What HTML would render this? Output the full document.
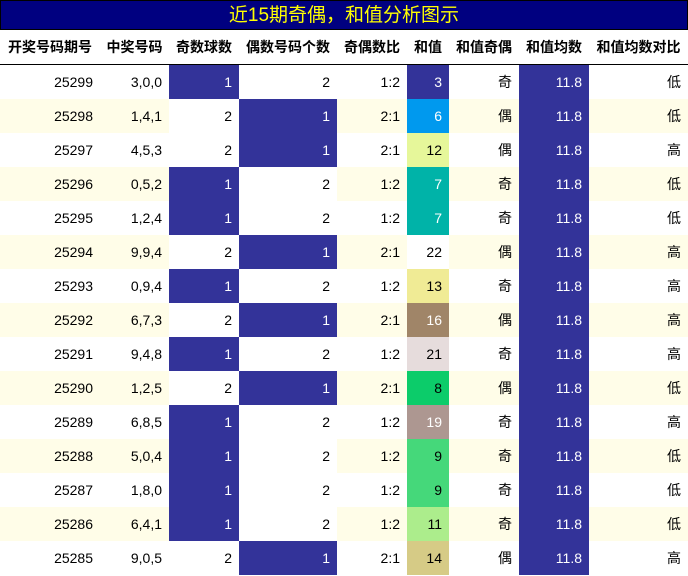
<!DOCTYPE html><html><head><meta charset="utf-8"><style>
body{margin:0;width:688px;height:576px;overflow:hidden;background:#fff;font-family:"Liberation Sans","Noto Sans CJK SC",sans-serif;}
.t{position:absolute;left:0;top:0;width:686px;height:28px;background:#000080;border:1px solid #000;color:#ff0;font-size:19px;line-height:29px;text-align:center;}
table{position:absolute;top:30px;left:0;border-collapse:collapse;table-layout:fixed;width:688px;font-size:14px;}
th{height:34px;font-weight:bold;color:#000;padding:0;text-align:center;border-bottom:1px solid #000;}
td{height:34px;padding:0 7px 0 0;text-align:right;color:#000;}
tr.a td{background:#fffde8;}
td.p{background:#333399 !important;color:#fff;}
</style></head><body>
<div class="t">近15期奇偶，和值分析图示</div>
<table>
<colgroup><col style="width:100px"><col style="width:69px"><col style="width:70px"><col style="width:98px"><col style="width:70px"><col style="width:42px"><col style="width:70px"><col style="width:70px"><col style="width:99px"></colgroup>
<tr><th>开奖号码期号</th><th>中奖号码</th><th>奇数球数</th><th>偶数号码个数</th><th>奇偶数比</th><th>和值</th><th>和值奇偶</th><th>和值均数</th><th>和值均数对比</th></tr>
<tr><td>25299</td><td>3,0,0</td><td class="p">1</td><td>2</td><td>1:2</td><td style="background:#333399;color:#fff">3</td><td>奇</td><td class="p">11.8</td><td>低</td></tr>
<tr class="a"><td>25298</td><td>1,4,1</td><td style="background:#fff">2</td><td class="p">1</td><td>2:1</td><td style="background:#0099ee;color:#fff">6</td><td>偶</td><td class="p">11.8</td><td>低</td></tr>
<tr><td>25297</td><td>4,5,3</td><td>2</td><td class="p">1</td><td>2:1</td><td style="background:#e6f79a">12</td><td>偶</td><td class="p">11.8</td><td>高</td></tr>
<tr class="a"><td>25296</td><td>0,5,2</td><td class="p">1</td><td style="background:#fff">2</td><td>1:2</td><td style="background:#00b3a8;color:#fff">7</td><td>奇</td><td class="p">11.8</td><td>低</td></tr>
<tr><td>25295</td><td>1,2,4</td><td class="p">1</td><td>2</td><td>1:2</td><td style="background:#00b3a8;color:#fff">7</td><td>奇</td><td class="p">11.8</td><td>低</td></tr>
<tr class="a"><td>25294</td><td>9,9,4</td><td style="background:#fff">2</td><td class="p">1</td><td>2:1</td><td style="background:#fff">22</td><td>偶</td><td class="p">11.8</td><td>高</td></tr>
<tr><td>25293</td><td>0,9,4</td><td class="p">1</td><td>2</td><td>1:2</td><td style="background:#f0eb95">13</td><td>奇</td><td class="p">11.8</td><td>高</td></tr>
<tr class="a"><td>25292</td><td>6,7,3</td><td style="background:#fff">2</td><td class="p">1</td><td>2:1</td><td style="background:#a08568;color:#fff">16</td><td>偶</td><td class="p">11.8</td><td>高</td></tr>
<tr><td>25291</td><td>9,4,8</td><td class="p">1</td><td>2</td><td>1:2</td><td style="background:#e6dcdc">21</td><td>奇</td><td class="p">11.8</td><td>高</td></tr>
<tr class="a"><td>25290</td><td>1,2,5</td><td style="background:#fff">2</td><td class="p">1</td><td>2:1</td><td style="background:#0ccc6a">8</td><td>偶</td><td class="p">11.8</td><td>低</td></tr>
<tr><td>25289</td><td>6,8,5</td><td class="p">1</td><td>2</td><td>1:2</td><td style="background:#ad9791;color:#fff">19</td><td>奇</td><td class="p">11.8</td><td>高</td></tr>
<tr class="a"><td>25288</td><td>5,0,4</td><td class="p">1</td><td style="background:#fff">2</td><td>1:2</td><td style="background:#45d87a">9</td><td>奇</td><td class="p">11.8</td><td>低</td></tr>
<tr><td>25287</td><td>1,8,0</td><td class="p">1</td><td>2</td><td>1:2</td><td style="background:#45d87a">9</td><td>奇</td><td class="p">11.8</td><td>低</td></tr>
<tr class="a"><td>25286</td><td>6,4,1</td><td class="p">1</td><td style="background:#fff">2</td><td>1:2</td><td style="background:#aced8c">11</td><td>奇</td><td class="p">11.8</td><td>低</td></tr>
<tr><td>25285</td><td>9,0,5</td><td>2</td><td class="p">1</td><td>2:1</td><td style="background:#d6cb86">14</td><td>偶</td><td class="p">11.8</td><td>高</td></tr>
</table>
</body></html>
